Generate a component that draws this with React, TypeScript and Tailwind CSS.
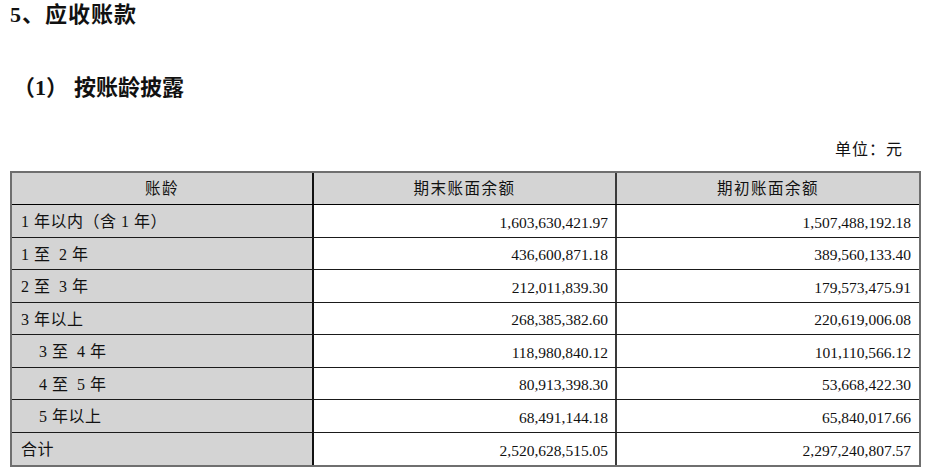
import React from 'react';

const rows = [
  { name: '1 年以内（含 1 年）', end: '1,603,630,421.97', begin: '1,507,488,192.18', indent: false },
  { name: '1 至\u20022 年', end: '436,600,871.18', begin: '389,560,133.40', indent: false },
  { name: '2 至\u20023 年', end: '212,011,839.30', begin: '179,573,475.91', indent: false },
  { name: '3 年以上', end: '268,385,382.60', begin: '220,619,006.08', indent: false },
  { name: '3 至\u20024 年', end: '118,980,840.12', begin: '101,110,566.12', indent: true },
  { name: '4 至\u20025 年', end: '80,913,398.30', begin: '53,668,422.30', indent: true },
  { name: '5 年以上', end: '68,491,144.18', begin: '65,840,017.66', indent: true },
  { name: '合计', end: '2,520,628,515.05', begin: '2,297,240,807.57', indent: false },
];

const App: React.FC = () => {
  return (
    <div className="w-[926px] h-[471px] bg-white overflow-hidden text-[#111] font-['Liberation_Serif','Noto_Sans_CJK_SC',serif]">
      <h1 className="pl-[10px] pt-[3px] h-[28px] text-[22px] leading-[24px] font-bold tracking-[1px]">
        5、应收账款
      </h1>

      <h2 className="pl-[13px] mt-[48px] h-[24px] text-[22px] leading-[24px] font-bold flex">
        <span>（1）</span>
        <span className="ml-[6px]">按账龄披露</span>
      </h2>

      <div className="mt-[40px] h-[20px] pr-[23px] text-right text-[16px] leading-[20px] tracking-[1px]">
        单位：元
      </div>

      <div className="mt-[11px] ml-[10px] w-[911px] border-2 border-[#6f6f6f] text-[15.5px]">
        <div className="grid grid-cols-[302px_303px_1fr] h-[32px] bg-[#d4d4d4] border-b-[1.5px] border-black tracking-[1.5px]">
          <div className="flex items-center justify-center pt-[1px] border-r-2 border-[#111]">账龄</div>
          <div className="flex items-center justify-center pt-[1px] border-r-2 border-[#3a3a3a]">期末账面余额</div>
          <div className="flex items-center justify-center pt-[1px]">期初账面余额</div>
        </div>
        {rows.map((row, i) => (
          <div
            key={row.name}
            className={`grid grid-cols-[302px_303px_1fr] h-[32.5px] ${
              i < rows.length - 1 ? 'border-b-[1.5px] border-[#1a1a1a]' : ''
            }`}
          >
            <div
              className={`flex items-center pt-[3px] bg-[#d4d4d4] border-r-2 border-[#111] text-[16px] tracking-[0.5px] ${
                row.indent ? 'pl-[27px]' : 'pl-[9px]'
              }`}
            >
              {row.name}
            </div>
            <div className="flex items-center justify-end pt-[3px] pr-[7px] border-r-2 border-[#3a3a3a]">{row.end}</div>
            <div className="flex items-center justify-end pt-[3px] pr-[8px]">{row.begin}</div>
          </div>
        ))}
      </div>
    </div>
  );
};

export default App;
